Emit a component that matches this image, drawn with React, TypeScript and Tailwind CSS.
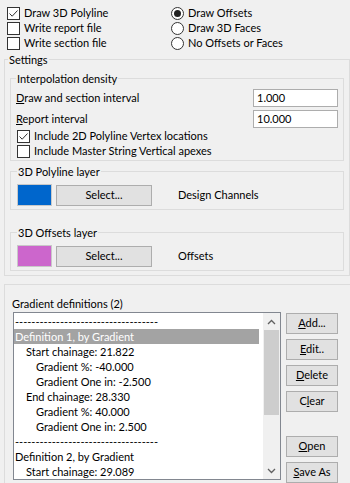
import React from "react";

const font = { fontFamily: 'Lato, "Noto Sans", sans-serif' };

function Check({ on, label }: { on?: boolean; label: React.ReactNode }) {
  return (
    <div className="flex h-[15px] items-center">
      <div className="flex h-[13px] w-[13px] items-center justify-center border border-[#333333] bg-white">
        {on && (
          <svg width="11" height="11" viewBox="0 0 11 11">
            <path d="M1.5 5.5 L4.2 8.2 L9.5 2.5" fill="none" stroke="#333" strokeWidth="1" />
          </svg>
        )}
      </div>
      <span className="ml-[4px]">{label}</span>
    </div>
  );
}

function Radio({ on, label }: { on?: boolean; label: string }) {
  return (
    <div className="flex h-[15px] items-center">
      <div className="flex h-[13px] w-[13px] items-center justify-center rounded-full border border-[#333333] bg-white">
        {on && <div className="h-[7px] w-[7px] rounded-full bg-[#222]" />}
      </div>
      <span className="ml-[4px]">{label}</span>
    </div>
  );
}

function Btn({ children, w = "w-[52px]" }: { children: React.ReactNode; w?: string }) {
  return (
    <div className={`flex h-[21px] ${w} items-center justify-center border border-[#adadad] bg-[#e1e1e1]`}>
      {children}
    </div>
  );
}

function LayerBox({ title, color, name, cls }: { title: string; color: string; name: string; cls: string }) {
  return (
    <fieldset className={`mx-[5px] border border-[#dcdcdc] px-[6px] pb-[3px] ${cls}`}>
      <legend className="px-[1px] leading-[15px]">{title}</legend>
      <div className="mt-[5px] flex items-center">
        <div className="h-[22px] w-[35px] border border-[#c8c8c8]" style={{ background: color }} />
        <div className="ml-[4px]">
          <Btn w="w-[96px]">Select...</Btn>
        </div>
        <span className="ml-[26px]">{name}</span>
      </div>
    </fieldset>
  );
}

const dashes = "-----------------------------------";

const items: [string, number, boolean?][] = [
  [dashes, 0],
  ["Definition 1, by Gradient", 0, true],
  ["Start chainage: 21.822", 1],
  ["Gradient %: -40.000", 2],
  ["Gradient One in: -2.500", 2],
  ["End chainage: 28.330", 1],
  ["Gradient %: 40.000", 2],
  ["Gradient One in: 2.500", 2],
  [dashes, 0],
  ["Definition 2, by Gradient", 0],
  ["Start chainage: 29.089", 1],
];

export default function App() {
  return (
    <div className="h-[483px] w-[350px] overflow-hidden bg-[#f0f0f0] text-[11px] text-black" style={font}>
      <div className="flex pt-[6px]">
        <div className="ml-[7px] w-[164px]">
          <Check on label="Draw 3D Polyline" />
          <Check label="Write report file" />
          <Check label="Write section file" />
        </div>
        <div>
          <Radio on label="Draw Offsets" />
          <Radio label="Draw 3D Faces" />
          <Radio label="No Offsets or Faces" />
        </div>
      </div>

      <fieldset className="ml-[4px] mt-[1px] w-[346px] border border-[#dcdcdc] pb-[4px]">
        <legend className="ml-[3px] px-[1px] leading-[15px]">Settings</legend>
        <fieldset className="mx-[5px] mt-[4px] border border-[#dcdcdc] px-[5px] pb-[1px]">
          <legend className="px-[1px] leading-[15px]">Interpolation density</legend>
          <div className="mt-[3px] flex h-[18px] items-center justify-between">
            <span>
              <u>D</u>raw and section interval
            </span>
            <div className="flex h-[18px] w-[85px] items-center border border-[#adadad] bg-white px-[3px]">1.000</div>
          </div>
          <div className="mt-[3px] flex h-[18px] items-center justify-between">
            <span>
              <u>R</u>eport interval
            </span>
            <div className="flex h-[18px] w-[85px] items-center border border-[#adadad] bg-white px-[3px]">10.000</div>
          </div>
          <div className="mt-[1px] pl-[1px]">
            <Check on label="Include 2D Polyline Vertex locations" />
            <Check label="Include Master String Vertical apexes" />
          </div>
        </fieldset>
        <LayerBox title="3D Polyline layer" color="#0066cc" name="Design Channels" cls="mt-[3px]" />
        <LayerBox title="3D Offsets layer" color="#cc66cc" name="Offsets" cls="mt-[15px]" />
      </fieldset>

      <div className="ml-[4px] mt-[8px] w-[346px] border-t border-l border-[#dcdcdc] pl-[8px] pt-[11px]">
        <div className="ml-[-1px] leading-[15px]">Gradient definitions (2)</div>
        <div className="mt-[1px] flex">
          <div className="flex h-[168px] w-[268px] border border-[#828790] bg-white">
            <div className="flex-1 pr-[4px] pt-[1px]">
              {items.map(([t, ind, sel], i) => (
                <div
                  key={i}
                  className={`h-[15px] whitespace-nowrap leading-[15px] ${
                    sel ? "bg-[#a3a3a3] text-white" : ""
                  } ${ind === 0 ? "pl-[1px]" : ind === 1 ? "pl-[12px]" : "pl-[22px]"}`}
                >
                  {t}
                </div>
              ))}
            </div>
            <div className="flex w-[17px] flex-col items-center bg-[#f0f0f0]">
              <div className="flex h-[17px] items-center justify-center">
                <svg width="9" height="6" viewBox="0 0 9 6">
                  <path d="M1 5 L4.5 1.5 L8 5" fill="none" stroke="#606060" strokeWidth="1.3" />
                </svg>
              </div>
              <div className="h-[85px] w-[15px] bg-[#cdcdcd]" />
              <div className="flex-1" />
              <div className="flex h-[17px] items-center justify-center">
                <svg width="9" height="6" viewBox="0 0 9 6">
                  <path d="M1 1 L4.5 4.5 L8 1" fill="none" stroke="#606060" strokeWidth="1.3" />
                </svg>
              </div>
            </div>
          </div>
          <div className="ml-[5px] flex flex-col gap-[5px] pt-[1px]">
            <Btn>
              <span>
                <u>A</u>dd...
              </span>
            </Btn>
            <Btn>
              <span>
                <u>E</u>dit..
              </span>
            </Btn>
            <Btn>
              <span>
                <u>D</u>elete
              </span>
            </Btn>
            <Btn>
              <span>
                C<u>l</u>ear
              </span>
            </Btn>
            <div className="h-[14px]" />
            <Btn>
              <span>
                <u>O</u>pen
              </span>
            </Btn>
            <Btn>
              <span>
                <u>S</u>ave As
              </span>
            </Btn>
          </div>
        </div>
      </div>
    </div>
  );
}
